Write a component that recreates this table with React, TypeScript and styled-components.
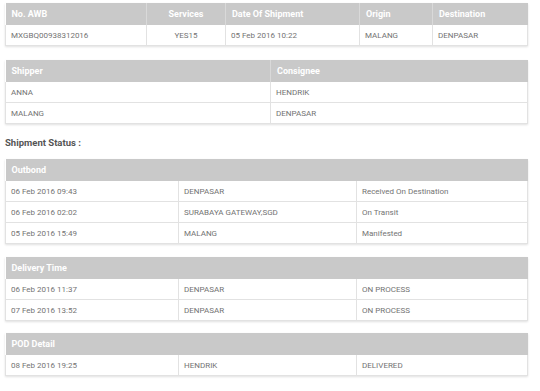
import React from "react";
import styled, {createGlobalStyle} from "styled-components";

const GlobalStyle = createGlobalStyle`
  body {
    margin: 0;
    background: #ffffff;
    font-family: Roboto, "Liberation Sans", sans-serif;
  }
`

const Page = styled.div`
  width: 523px;
  padding: 3px 12px 0 5px;
  display: flex;
  flex-direction: column;
`

const Table = styled.table<{marginBottom?: number}>`
  width: 100%;
  border-collapse: collapse;
  table-layout: fixed;
  margin-bottom: ${p => p.marginBottom ?? 13}px;
  box-shadow: 0 1px 2px rgba(0, 0, 0, 0.12);
`

const Head = styled.th<{align?: string}>`
  background: #c9c9c9;
  color: #ffffff;
  font-size: 9px;
  font-weight: 700;
  text-align: ${p => p.align ?? 'left'};
  height: 22px;
  padding: 0 6px;
  border-left: 1px solid #d9d9d9;
  &:first-child { border-left: none; }
`

const Cell = styled.td<{align?: string}>`
  color: #737373;
  font-size: 8px;
  text-align: ${p => p.align ?? 'left'};
  height: 20px;
  padding: 0 5px;
  border: 1px solid #e2e2e2;
  border-top: none;
`

const Title = styled.div`
  font-size: 9.5px;
  font-weight: 700;
  color: #555555;
  margin: 1px 0 11px 0;
`

type Row = string[]

const StatusTable = ({title, rows, mb}: {title: string, rows: Row[], mb?: number}) => (
  <Table marginBottom={mb}>
    <colgroup>
      <col style={{width: 173}}/>
      <col style={{width: 178}}/>
      <col/>
    </colgroup>
    <thead>
      <tr><Head colSpan={3}>{title}</Head></tr>
    </thead>
    <tbody>
      {rows.map((r, i) => (
        <tr key={i}>{r.map((c, j) => <Cell key={j}>{c}</Cell>)}</tr>
      ))}
    </tbody>
  </Table>
)

const App = () => {
  return (
    <Page>
      <GlobalStyle/>
      <Table marginBottom={14}>
        <colgroup>
          <col style={{width: 141}}/>
          <col style={{width: 79}}/>
          <col style={{width: 134}}/>
          <col style={{width: 73}}/>
          <col/>
        </colgroup>
        <thead>
          <tr>
            <Head>No. AWB</Head>
            <Head align="center">Services</Head>
            <Head>Date Of Shipment</Head>
            <Head>Origin</Head>
            <Head>Destination</Head>
          </tr>
        </thead>
        <tbody>
          <tr>
            <Cell>MXGBQ00938312016</Cell>
            <Cell align="center">YES15</Cell>
            <Cell>05 Feb 2016 10:22</Cell>
            <Cell>MALANG</Cell>
            <Cell>DENPASAR</Cell>
          </tr>
        </tbody>
      </Table>

      <Table marginBottom={12}>
        <colgroup>
          <col style={{width: 265}}/>
          <col/>
        </colgroup>
        <thead>
          <tr>
            <Head>Shipper</Head>
            <Head>Consignee</Head>
          </tr>
        </thead>
        <tbody>
          <tr><Cell>ANNA</Cell><Cell>HENDRIK</Cell></tr>
          <tr><Cell>MALANG</Cell><Cell>DENPASAR</Cell></tr>
        </tbody>
      </Table>

      <Title>Shipment Status :</Title>

      <StatusTable title="Outbond" rows={[
        ['06 Feb 2016 09:43', 'DENPASAR', 'Received On Destination'],
        ['06 Feb 2016 02:02', 'SURABAYA GATEWAY,SGD', 'On Transit'],
        ['05 Feb 2016 15:49', 'MALANG', 'Manifested'],
      ]}/>
      <StatusTable title="Delivery Time" mb={12} rows={[
        ['06 Feb 2016 11:37', 'DENPASAR', 'ON PROCESS'],
        ['07 Feb 2016 13:52', 'DENPASAR', 'ON PROCESS'],
      ]}/>
      <StatusTable title="POD Detail" rows={[
        ['08 Feb 2016 19:25', 'HENDRIK', 'DELIVERED'],
      ]}/>
    </Page>
  )
}

export default App
